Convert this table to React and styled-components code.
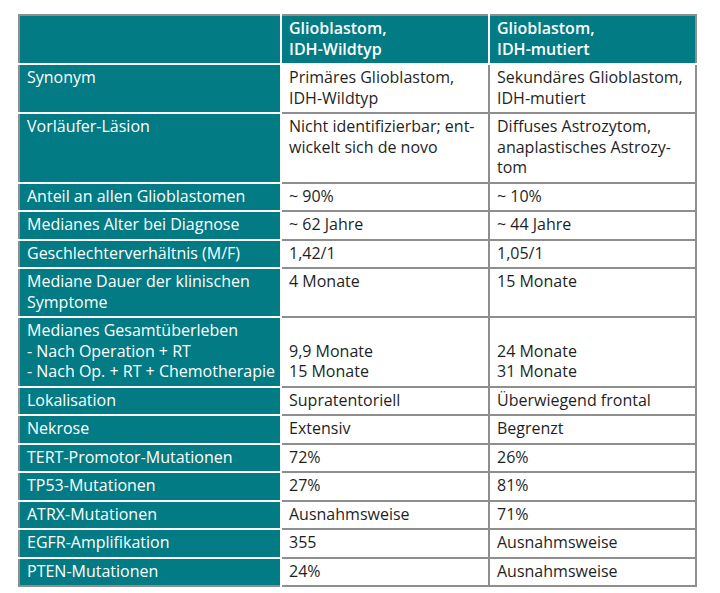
import React from 'react';
import styled, { createGlobalStyle } from 'styled-components';

const GlobalStyle = createGlobalStyle`
  html, body {
    margin: 0;
    padding: 0;
    background: #ffffff;
  }
  body {
    font-family: 'Open Sans', 'Noto Sans', sans-serif;
  }
`;

const TEAL = '#027b84';
const GRID = '#8e8e8e';

const rows = [
  { label: ['Synonym'], a: ['Primäres Glioblastom,', 'IDH-Wildtyp'], b: ['Sekundäres Glioblastom,', 'IDH-mutiert'] },
  { label: ['Vorläufer-Läsion'], a: ['Nicht identifizierbar; ent-', 'wickelt sich de novo'], b: ['Diffuses Astrozytom,', 'anaplastisches Astrozy-', 'tom'] },
  { label: ['Anteil an allen Glioblastomen'], a: ['~ 90%'], b: ['~ 10%'] },
  { label: ['Medianes Alter bei Diagnose'], a: ['~ 62 Jahre'], b: ['~ 44 Jahre'] },
  { label: ['Geschlechterverhältnis (M/F)'], a: ['1,42/1'], b: ['1,05/1'] },
  { label: ['Mediane Dauer der klinischen', 'Symptome'], a: ['4 Monate'], b: ['15 Monate'] },
  {
    label: ['Medianes Gesamtüberleben', '- Nach Operation + RT', '- Nach Op. + RT + Chemotherapie'],
    a: ['', '9,9 Monate', '15 Monate'],
    b: ['', '24 Monate', '31 Monate'],
  },
  { label: ['Lokalisation'], a: ['Supratentoriell'], b: ['Überwiegend frontal'] },
  { label: ['Nekrose'], a: ['Extensiv'], b: ['Begrenzt'] },
  { label: ['TERT-Promotor-Mutationen'], a: ['72%'], b: ['26%'] },
  { label: ['TP53-Mutationen'], a: ['27%'], b: ['81%'] },
  { label: ['ATRX-Mutationen'], a: ['Ausnahmsweise'], b: ['71%'] },
  { label: ['EGFR-Amplifikation'], a: ['355'], b: ['Ausnahmsweise'] },
  { label: ['PTEN-Mutationen'], a: ['24%'], b: ['Ausnahmsweise'] },
];

const Lines = ({ items }) =>
  items.map((t, i) => (
    <Line key={i}>{t === '' ? '\u00a0' : t}</Line>
  ));

export default function App() {
  return (
    <Page>
      <GlobalStyle />
      <Table>
        <colgroup>
          <col style={{ width: 262 }} />
          <col style={{ width: 208 }} />
          <col style={{ width: 207 }} />
        </colgroup>
        <thead>
          <tr>
            <HeadCell />
            <HeadCell>
              <Lines items={['Glioblastom,', 'IDH-Wildtyp']} />
            </HeadCell>
            <HeadCell $last>
              <Lines items={['Glioblastom,', 'IDH-mutiert']} />
            </HeadCell>
          </tr>
        </thead>
        <tbody>
          {rows.map((r, i) => (
            <tr key={i}>
              <LabelCell $last={i === rows.length - 1}>
                <Lines items={r.label} />
              </LabelCell>
              <Cell>
                <Lines items={r.a} />
              </Cell>
              <Cell>
                <Lines items={r.b} />
              </Cell>
            </tr>
          ))}
        </tbody>
      </Table>
    </Page>
  );
}

const Page = styled.div`
  padding: 14px 0 0 18px;
`;

const Table = styled.table`
  border-collapse: collapse;
  table-layout: fixed;
  width: 679px;
  border: 2px solid ${GRID};
  font-size: 16px;
  line-height: 20.5px;
`;

const BaseCell = styled.td`
  padding: 2px 7px 4px;
  vertical-align: top;
  text-align: left;
`;

const HeadCell = styled(BaseCell).attrs({ as: 'th' })`
  background: ${TEAL};
  color: #ffffff;
  font-weight: 600;
  border-right: 2px solid #ffffff;
  border-bottom: 2px solid #ffffff;
  ${(p) => p.$last && `border-right: none;`}
`;

const LabelCell = styled(BaseCell).attrs({ as: 'th' })`
  background: ${TEAL};
  color: #ffffff;
  font-weight: 400;
  border-bottom: 2px solid #ffffff;
  border-right: 2px solid #ffffff;
  ${(p) => p.$last && `border-bottom: none;`}
`;

const Cell = styled(BaseCell)`
  background: #ffffff;
  color: #1f1f1f;
  border: 2px solid ${GRID};
`;

const Line = styled.div`
  white-space: nowrap;
`;
